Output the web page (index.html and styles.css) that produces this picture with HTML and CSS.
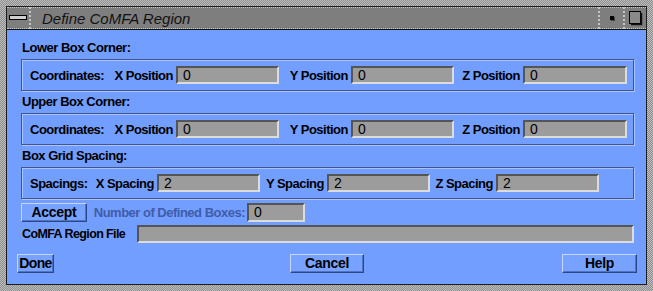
FILE: index.html
```html
<!DOCTYPE html>
<html lang="en">
<head>
  <meta charset="UTF-8" />
  <title>Define CoMFA Region</title>
  <link rel="stylesheet" href="styles.css">
</head>
<body>
  <div class="window">
    <div class="frame">
      <div class="titlebar">
        <div class="tb-btn tb-menu">
          <svg width="18" height="6" viewBox="0 0 18 6"><rect x="0.5" y="0.5" width="17" height="4" fill="#cfcfcf" stroke="#000"/></svg>
        </div>
        <div class="tb-title">Define CoMFA Region</div>
        <div class="tb-btn tb-min"><span class="min-dot"></span></div>
        <div class="tb-btn tb-max">
          <svg width="16" height="17" viewBox="0 0 16 17"><rect x="1.5" y="1.5" width="11" height="12" fill="#8a8a8a" stroke="#000"/><polyline points="13.5,3 13.5,14.5 3,14.5" fill="none" stroke="#111" stroke-width="1.5"/></svg>
        </div>
      </div>

      <div class="client">
        <div class="section-label">Lower Box Corner:</div>
        <div class="group">
          <span class="lbl" style="width:81px">Coordinates:</span>
          <span class="lbl r" style="width:65px">X Position</span>
          <div class="field">0</div>
          <span class="lbl r" style="width:72px">Y Position</span>
          <div class="field">0</div>
          <span class="lbl r" style="width:69px">Z Position</span>
          <div class="field wide">0</div>
        </div>

        <div class="section-label">Upper Box Corner:</div>
        <div class="group">
          <span class="lbl" style="width:81px">Coordinates:</span>
          <span class="lbl r" style="width:65px">X Position</span>
          <div class="field">0</div>
          <span class="lbl r" style="width:72px">Y Position</span>
          <div class="field">0</div>
          <span class="lbl r" style="width:69px">Z Position</span>
          <div class="field wide">0</div>
        </div>

        <div class="section-label">Box Grid Spacing:</div>
        <div class="group">
          <span class="lbl" style="width:65px">Spacings:</span>
          <span class="lbl r" style="width:62px">X Spacing</span>
          <div class="field">2</div>
          <span class="lbl r" style="width:67px">Y Spacing</span>
          <div class="field">2</div>
          <span class="lbl r" style="width:66px">Z Spacing</span>
          <div class="field">2</div>
        </div>

        <div class="accept-row">
          <button class="btn accept">Accept</button>
          <span class="lbl r disabled">Number of Defined Boxes:</span>
          <div class="field count">0</div>
        </div>

        <div class="file-row">
          <span class="lbl file-label">CoMFA Region File</span>
          <div class="field file"></div>
        </div>

        <div class="button-row">
          <button class="btn done">Done</button>
          <button class="btn cancel">Cancel</button>
          <button class="btn help">Help</button>
        </div>
      </div>
    </div>
  </div>
</body>
</html>
```

FILE: styles.css
```css
body {
  margin: 0;
  width: 653px;
  height: 291px;
  overflow: hidden;
}

.window {
  width: 653px;
  height: 291px;
  box-sizing: border-box;
  padding: 6px;
  background: repeating-conic-gradient(#8e8e8e 0 25%, #bdbdbd 0 50%) 0 0 / 2px 2px;
}

.frame {
  height: 100%;
  box-sizing: border-box;
  border: 1px solid #1c1c1c;
  display: flex;
  flex-direction: column;
}

/* title bar */
.titlebar {
  height: 22px;
  flex: none;
  display: flex;
  background-color: #7e7e7e;
  border-bottom: 1px solid #111;
}

.tb-btn {
  display: flex;
  align-items: center;
  justify-content: center;
  box-sizing: border-box;
  border-top: 1px dotted #c6c6c6;
  border-bottom: 1px dotted #c6c6c6;
}

.tb-menu {
  width: 24px;
  border-right: 2px dotted #c6c6c6;
}

.tb-title {
  flex: 1;
  padding-left: 11px;
  font-family: "Liberation Sans", Arial, sans-serif;
  font-style: italic;
  font-size: 15px;
  line-height: 21px;
  color: #111;
  border-top: 1px dotted #c6c6c6;
  border-bottom: 1px dotted #c6c6c6;
  box-sizing: border-box;
}

.tb-min {
  width: 25px;
  border-left: 2px dotted #c6c6c6;
}

.tb-max {
  width: 23px;
  border-left: 2px dotted #c6c6c6;
}

.min-dot {
  width: 4px;
  height: 4px;
  background-color: #000;
  box-shadow: 1px 1px 0 #444;
}

/* dialog body */
.client {
  flex: 1;
  background-color: #729eff;
  padding: 7px 12px 11px 14px;
  display: flex;
  flex-direction: column;
  font-family: "Liberation Sans", Arial, sans-serif;
  font-weight: bold;
  font-size: 13px;
  letter-spacing: -0.5px;
  color: #000;
}

.section-label {
  height: 22px;
  box-sizing: border-box;
  padding: 3px 0 0 1px;
  line-height: 16px;
}

.group {
  height: 32px;
  box-sizing: border-box;
  border: 1px solid #44558a;
  box-shadow: inset 1px 1px 0 #a9c3ff, 1px 1px 0 #a9c3ff;
  padding-left: 8px;
  display: flex;
  align-items: center;
}

.lbl {
  white-space: nowrap;
  box-sizing: border-box;
  flex: none;
}

.lbl.r {
  text-align: right;
  padding-right: 3px;
}

.field {
  box-sizing: border-box;
  flex: none;
  width: 103px;
  height: 18px;
  background-color: #9c9c9c;
  border: 2px solid;
  border-color: #555 #dcdcdc #dcdcdc #555;
  padding-left: 5px;
  font-weight: normal;
  font-size: 14px;
  letter-spacing: 0;
  line-height: 14px;
}

.field.wide {
  width: 104px;
}

.accept-row {
  margin-top: 4px;
  height: 19px;
  display: flex;
  align-items: center;
}

.disabled {
  width: 160px;
  color: #405ca8;
  padding-right: 2px !important;
}

.field.count {
  width: 58px;
  height: 19px;
  line-height: 15px;
}

.file-row {
  margin-top: 3px;
  height: 18px;
  display: flex;
  align-items: center;
}

.file-label {
  width: 116px;
  padding-left: 1px;
  font-size: 12.5px;
  letter-spacing: -0.6px;
}

.field.file {
  flex: 1;
}

.button-row {
  margin-top: auto;
  margin-left: -4px;
  margin-right: -3px;
  display: flex;
}

.btn {
  box-sizing: border-box;
  height: 19px;
  padding: 0;
  background-color: #78a2ff;
  border: 1px solid;
  border-color: #c4d6ff #2c4688 #2c4688 #c4d6ff;
  box-shadow: inset -1px -1px 0 #5273c4;
  font: inherit;
  font-size: 14px;
  letter-spacing: -0.3px;
  line-height: 15px;
  color: #000;
  text-align: center;
}

.accept { width: 66px; }
.done { width: 37px; letter-spacing: -0.6px; }
.cancel { width: 74px; margin-left: 236px; }
.help { width: 75px; margin-left: auto; }
```
